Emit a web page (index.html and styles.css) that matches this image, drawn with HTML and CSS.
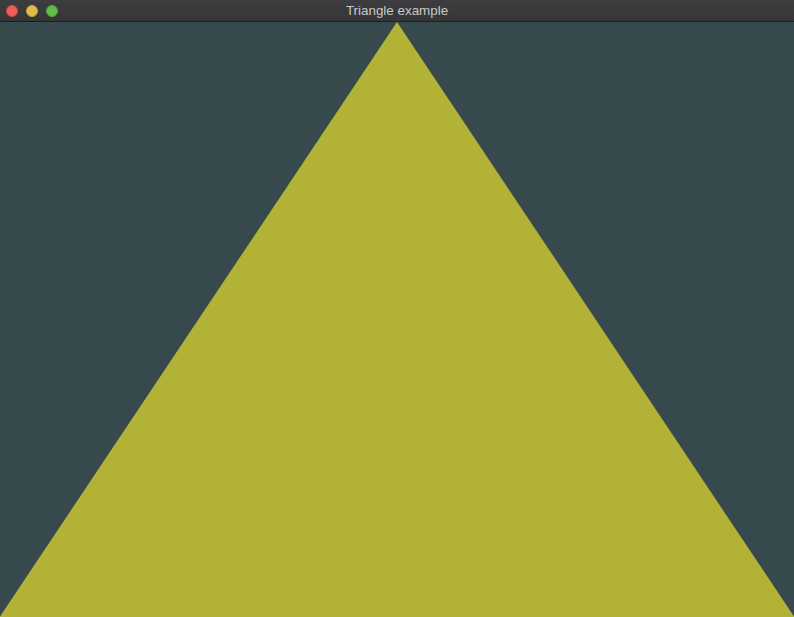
FILE: index.html
```html
<!DOCTYPE html>
<html>
<head>
<meta charset="utf-8">
<link rel="stylesheet" href="styles.css">
</head>
<body>
<div class="window">
  <div class="titlebar">
    <div class="lights">
      <span class="light red"></span>
      <span class="light yellow"></span>
      <span class="light green"></span>
    </div>
    <div class="title">Triangle example</div>
  </div>
  <div class="canvas">
    <svg class="scene" viewBox="0 0 794 595" width="794" height="595" preserveAspectRatio="none">
      <polygon points="397,0 -1,596 795,596" fill="#b2b236"/>
    </svg>
  </div>
</div>
</body>
</html>
```
FILE: styles.css
```css
html, body {
  margin: 0;
  padding: 0;
  width: 794px;
  height: 617px;
  overflow: hidden;
  background: #364a4e;
}
.window {
  display: flex;
  flex-direction: column;
  width: 794px;
  height: 617px;
}
.titlebar {
  height: 22px;
  flex: 0 0 22px;
  box-sizing: border-box;
  background: linear-gradient(#3d3d3f, #363638);
  border-bottom: 1px solid #1e1e1f;
  display: flex;
  align-items: center;
  position: relative;
}
.lights {
  display: flex;
  gap: 8px;
  padding-left: 6px;
}
.light {
  width: 12px;
  height: 12px;
  border-radius: 50%;
  box-sizing: border-box;
}
.red { background: #ec5f57; border: 0.5px solid #d0483f; }
.yellow { background: #e0bd4b; border: 0.5px solid #c9a23a; }
.green { background: #5fbd48; border: 0.5px solid #4ea63a; }
.title {
  position: absolute;
  left: 0;
  right: 0;
  top: 0;
  height: 21px;
  line-height: 22px;
  text-align: center;
  font-family: "Liberation Sans", Arial, sans-serif;
  font-size: 13.4px;
  color: #c8c8c8;
}
.canvas {
  flex: 1;
  background: #364a4e;
}
.scene {
  display: block;
}
```
